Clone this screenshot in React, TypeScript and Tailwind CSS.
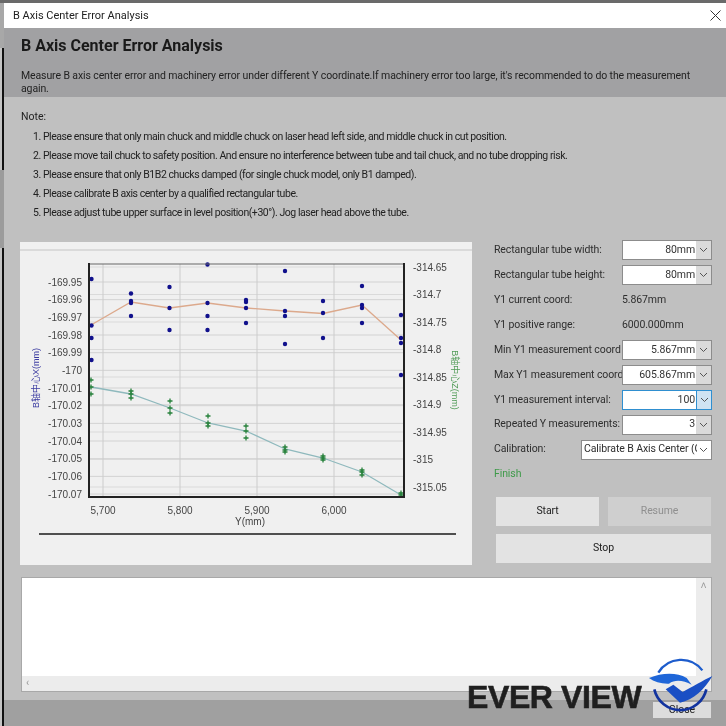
import React from 'react';

const leftTicks = ['-169.95', '-169.96', '-169.97', '-169.98', '-169.99', '-170', '-170.01', '-170.02', '-170.03', '-170.04', '-170.05', '-170.06', '-170.07'];
const rightTicks = ['-314.65', '-314.7', '-314.75', '-314.8', '-314.85', '-314.9', '-314.95', '-315', '-315.05'];
const xTicks = [['5,700', 103], ['5,800', 180], ['5,900', 257], ['6,000', 334]] as const;

const bluePoints: [number, number[]][] = [
  [91.5, [279, 325.5, 338, 360]],
  [131, [293.5, 301, 303, 316]],
  [169.5, [287, 308, 330]],
  [207.5, [264.5, 303, 316, 330]],
  [246, [300, 302, 308, 323]],
  [285, [271, 311, 316, 344]],
  [323, [301, 313, 338]],
  [362, [286, 305, 308, 323]],
  [401, [315, 338, 343, 375]],
];
const greenPoints: [number, number[]][] = [
  [91, [380, 387, 394]],
  [131, [391, 394, 398]],
  [170, [401, 408, 413]],
  [208, [416, 423, 426]],
  [246, [426, 431, 438]],
  [285, [447, 450, 452]],
  [323, [456, 458, 460]],
  [362, [470, 472, 475]],
  [401, [493, 495]],
];
const orangeLine = '91,325 131,302 169.5,308 207.5,303 246,308 285,311 323,313.5 362,305 401,340';
const tealLine = '91,387 131,394 170,408 208,423 246,431 285,449 323,458 362,472 401,495';

const notes = [
  '1. Please ensure that only main chuck and middle chuck on laser head left side, and middle chuck in cut position.',
  '2. Please move tail chuck to safety position. And ensure no interference between tube and tail chuck, and no tube dropping risk.',
  '3. Please ensure that only B1B2 chucks damped (for single chuck model, only B1 damped).',
  '4. Please calibrate B axis center by a qualified rectangular tube.',
  '5. Please adjust tube upper surface in level position(+30°). Jog laser head above the tube.',
];

function Chevron() {
  return (
    <svg width="9" height="6" viewBox="0 0 9 6" fill="none" stroke="#555" strokeWidth="1">
      <path d="M1 1l3.5 3.5L8 1" />
    </svg>
  );
}

function Combo({ value, focus }: { value: string; focus?: boolean }) {
  return (
    <div className={`relative flex h-[20px] w-[90px] shrink-0 items-stretch border bg-white ${focus ? 'border-[#2f8fd0]' : 'border-[#8c8c8c]'}`}>
      <div className="flex flex-1 items-center justify-end text-[#333]">{value}</div>
      <div className={`ml-[1px] flex w-[15px] items-center justify-center ${focus ? 'bg-[#cfe3f2] border-l border-[#2f8fd0]' : 'bg-[#dadada]'}`}>
        <Chevron />
      </div>
    </div>
  );
}

function Row({ label, children }: { label: string; children: React.ReactNode }) {
  return (
    <div className="flex h-[24.9px] items-center justify-between whitespace-nowrap text-[#2e2e2e]">
      <span className="w-0 flex-1">{label}</span>
      {children}
    </div>
  );
}

function Chart() {
  return (
    <svg width="452" height="323" viewBox="20 242 452 323" className="block font-['Liberation_Sans','Noto_Sans_CJK_SC',sans-serif]">
      <line x1="20" x2="472" y1="250" y2="250" stroke="#c4c4c4" />
      {leftTicks.map((_, i) => (
        <line key={i} x1="89" x2="404" y1={282 + i * 17.67} y2={282 + i * 17.67} stroke="#d2d2d2" />
      ))}
      {rightTicks.map((_, i) => (
        <line key={i} x1="89" x2="404" y1={267 + i * 27.5} y2={267 + i * 27.5} stroke="#dadada" />
      ))}
      {xTicks.map(([, x]) => (
        <line key={x} x1={x} x2={x} y1="264" y2="497" stroke="#cccccc" />
      ))}
      <polyline points={orangeLine} fill="none" stroke="#dca98c" strokeWidth="1.3" />
      <polyline points={tealLine} fill="none" stroke="#8fb9bd" strokeWidth="1.3" />
      {bluePoints.map(([x, ys]) => ys.map((y) => <circle key={`${x}-${y}`} cx={x} cy={y} r="2.2" fill="#10108c" />))}
      {greenPoints.map(([x, ys]) =>
        ys.map((y) => (
          <path key={`${x}-${y}`} d={`M${x - 2.5} ${y}h5M${x} ${y - 2.5}v5`} stroke="#26803a" strokeWidth="1.3" />
        )),
      )}
      <path d="M89 264H404" stroke="#666" strokeWidth="1" />
      <path d="M89 263V497H404V263" fill="none" stroke="#222" strokeWidth="2" />
      {xTicks.map(([label, x]) => (
        <text key={label} x={x} y="514" textAnchor="middle" fontSize="10" fill="#444">{label}</text>
      ))}
      {leftTicks.map((t, i) => (
        <text key={t} x="82" y={285.5 + i * 17.67} textAnchor="end" fontSize="10" fill="#444">{t}</text>
      ))}
      {rightTicks.map((t, i) => (
        <text key={t} x="413" y={270.5 + i * 27.5} fontSize="10" fill="#444">{t}</text>
      ))}
      <text x="250" y="525" textAnchor="middle" fontSize="10" fill="#444">Y(mm)</text>
      <text transform="translate(39 378) rotate(-90)" textAnchor="middle" fontSize="9" fill="#3a3aa0">B轴中心X(mm)</text>
      <text transform="translate(452 380) rotate(90)" textAnchor="middle" fontSize="9" fill="#4f9a55">B轴中心Z(mm)</text>
      <line x1="39" x2="456" y1="534" y2="534" stroke="#1a1a1a" strokeWidth="1.4" />
    </svg>
  );
}

function Logo() {
  return (
    <svg width="72" height="70" viewBox="0 0 216 210">
      <path d="M40 62A80 80 0 0 1 172 55" fill="none" stroke="#1d5ccc" strokeWidth="7" />
      <path d="M28 112A80 80 0 0 0 184 112" fill="none" stroke="#12339f" strokeWidth="8" />
      <path d="M12 78C50 62 95 60 125 78L140 98C115 85 90 82 72 95C50 96 28 90 12 78Z" fill="#1f66d8" />
      <path d="M62 112L85 98L113 120C140 105 175 85 202 72C180 110 145 145 105 152Z" fill="#1a4fc4" />
    </svg>
  );
}

export default function App() {
  return (
    <div className="relative flex h-[726px] w-[726px] flex-col overflow-hidden bg-[#c0c0c0] font-['Roboto','Open_Sans',sans-serif] text-[10.5px] leading-none text-[#222] blur-[0.35px]">
      <div className="h-[3px] shrink-0 bg-[#6a6a6a]" />
      <div className="flex min-h-0 flex-1">
        {/* strip of the desktop behind the window */}
        <div className="flex w-[4px] shrink-0 flex-col">
          <div className="h-[45px] bg-[#a8a8a8]" />
          <div className="h-[122px] border-l-2 border-[#c4c4c4] bg-[#111]" />
          <div className="h-[78px] bg-[#9c9c9c]" />
          <div className="flex-1 border-l-2 border-[#c4c4c4] bg-[#111]" />
        </div>
        <div className="flex min-w-0 flex-1 flex-col">
          <div className="flex h-[25px] shrink-0 items-center justify-between bg-white pl-[9px] pr-[5px] text-[11px]">
            <span>B Axis Center Error Analysis</span>
            <svg width="11" height="11" viewBox="0 0 11 11" stroke="#333" strokeWidth="1">
              <path d="M.5.5l10 10M10.5.5l-10 10" />
            </svg>
          </div>

          <div className="h-[69px] shrink-0 bg-[#a1a1a3] pl-[17px] pr-[20px]">
            <h1 className="pt-[10px] text-[16px] font-bold leading-[15px] text-[#1a1a1a]">B Axis Center Error Analysis</h1>
            <p className="mt-[16px] text-[10.5px] leading-[13px] tracking-[-0.11px] text-[#222]">
              Measure B axis center error and machinery error under different Y coordinate.If machinery error too large, it's recommended to do the measurement again.
            </p>
          </div>

          <div className="h-[140px] shrink-0 pl-[17px]">
            <p className="pt-[15px] text-[#222]">Note:</p>
            <ol className="mt-[9.5px] flex flex-col gap-[9px] pl-[12px] tracking-[-0.45px]">
              {notes.map((n) => (
                <li key={n} className="h-[10px] whitespace-nowrap">{n}</li>
              ))}
            </ol>
          </div>

          <div className="flex h-[328px] shrink-0 pl-[16px]">
            <div className="mt-[5px] h-[323px] w-[452px] shrink-0 bg-[#f0f0f0]">
              <Chart />
            </div>
            <div className="ml-[22px] flex w-[218px] flex-col pt-[1px] tracking-[-0.1px]">
              <Row label="Rectangular tube width:"><Combo value="80mm" /></Row>
              <Row label="Rectangular tube height:"><Combo value="80mm" /></Row>
              <Row label="Y1 current coord:"><span className="w-[90px]">5.867mm</span></Row>
              <Row label="Y1 positive range:"><span className="w-[90px]">6000.000mm</span></Row>
              <Row label="Min Y1 measurement coord"><Combo value="5.867mm" /></Row>
              <Row label="Max Y1 measurement coord"><Combo value="605.867mm" /></Row>
              <Row label="Y1 measurement interval:"><Combo value="100" focus /></Row>
              <Row label="Repeated Y measurements:"><Combo value="3" /></Row>
              <Row label="Calibration:">
                <div className="flex h-[20px] w-[131px] shrink-0 items-center justify-between overflow-hidden border border-[#8c8c8c] bg-white pl-[2px] pr-[3px]">
                  <span className="overflow-hidden whitespace-nowrap">Calibrate B Axis Center (C</span>
                  <span className="ml-[2px] shrink-0"><Chevron /></span>
                </div>
              </Row>
              <div className="flex h-[24.9px] items-center text-[#3f9a4a]">Finish</div>
              <div className="ml-[2px] mt-[10px] w-[215px]">
                <div className="grid grid-cols-2 gap-[9px]">
                  <button className="h-[29px] bg-[#e3e3e3] text-[#222]">Start</button>
                  <button className="h-[29px] bg-[#cfcfcf] text-[#8f8f8f]">Resume</button>
                </div>
                <button className="mt-[8px] h-[29px] w-full bg-[#e3e3e3] text-[#222]">Stop</button>
              </div>
            </div>
          </div>

          <div className="ml-[17px] mt-[12px] flex h-[115px] w-[691px] shrink-0 border border-[#a8a8a8] bg-[#ececec]">
            <div className="flex min-w-0 flex-1 flex-col">
              <div className="flex-1 bg-white" />
              <div className="flex h-[15px] items-center pl-[4px] text-[#999]">‹</div>
            </div>
            <div className="flex w-[15px] justify-center pt-[3px] text-[#999]">˄</div>
          </div>

          <div className="mt-[8px] flex flex-1 justify-end bg-[#a0a0a0] pr-[15px] pt-[2px]">
            <button className="h-[16px] w-[58px] bg-[#dcdcdc] text-[#222]">Close</button>
          </div>
        </div>
      </div>

      {/* watermark over the footer */}
      <div className="absolute left-[467px] top-[652px] flex items-end">
        <span className="mb-[10px] font-['Liberation_Sans',sans-serif] text-[32px] font-bold leading-[30px] tracking-[-0.4px] text-[#1f1f1f] [-webkit-text-stroke:0.6px_#1f1f1f]">EVER VIEW</span>
        <div className="ml-[4px]"><Logo /></div>
      </div>
    </div>
  );
}
